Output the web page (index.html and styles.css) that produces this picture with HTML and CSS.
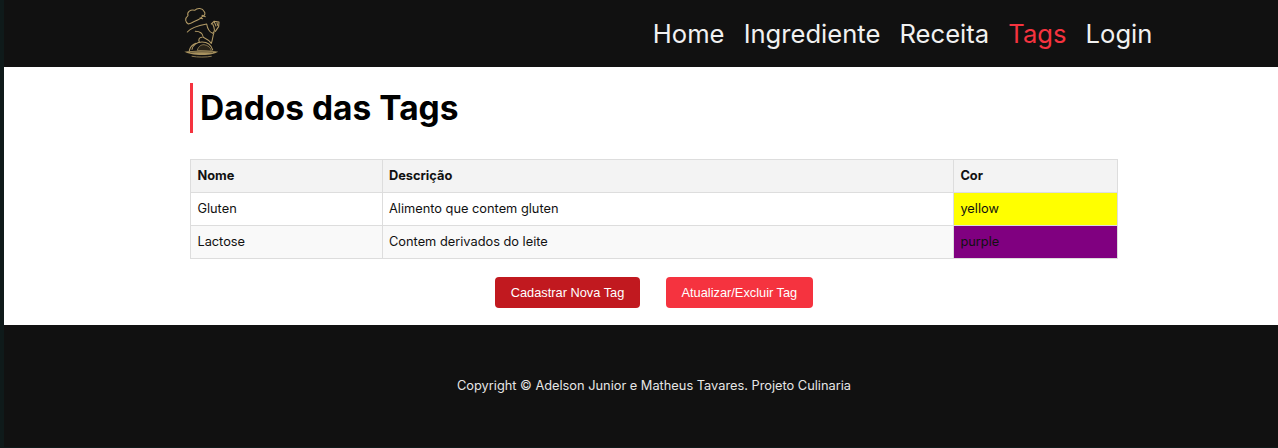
FILE: index.html
```html
<!DOCTYPE html>
<html lang="pt-BR">

<head>
    <meta charset="UTF-8">
    <meta name="viewport" content="width=device-width, initial-scale=1.0">
    <title>Dados das Tags</title>
    <link rel="stylesheet" href="styles.css">
</head>

<body>
    <header class="topo">
        <div class="topo-inner">
            <a class="logo" href="#">
                <svg width="44" height="56" viewBox="30 18 132 168" fill="none" stroke="#b39b66" stroke-width="3.2" stroke-linecap="round" stroke-linejoin="round">
                    <!-- chapeu -->
                    <path d="M55 72C46 66 43 56 54 47C50 36 62 27 74 31C82 23 98 24 102 34C108 40 104 48 96 50C92 58 72 64 62 70Z" />
                    <path d="M96 46L106 50M90 54L98 56" />
                    <!-- corpo e braco -->
                    <path d="M52 96C62 84 88 76 110 72C112 84 118 96 128 100C134 96 136 88 128 72" />
                    <path d="M76 94C88 94 98 100 100 112C108 116 118 122 124 130C128 120 128 108 132 98" />
                    <path d="M96 112C88 112 84 118 88 126" />
                    <!-- mao -->
                    <path d="M124 72L132 64L147 66L146 80L136 94M132 64L138 78M140 65L143 76" />
                    <!-- travessa -->
                    <path d="M66 148C68 136 80 126 96 126C112 126 124 136 128 150" />
                    <path d="M58 152C60 142 68 134 78 130" />
                    <path d="M82 150C86 138 94 134 102 134C114 136 122 142 124 152Z" fill="#2a2418" stroke-width="2" />
                    <path d="M43 155C70 151 118 151 145 155C136 160 122 165 96 165C72 165 52 160 43 155Z" fill="#a8925f" stroke="none" />
                    <path d="M66 169C82 172 110 172 124 169" stroke="#8a7850" stroke-width="3" />
                    <path d="M62 157C82 155 110 155 128 157" stroke="#3a3222" stroke-width="2" />
                </svg>
            </a>
            <nav class="menu">
                <a href="#">Home</a>
                <a href="#">Ingrediente</a>
                <a href="#">Receita</a>
                <a class="ativo" href="#">Tags</a>
                <a href="#">Login</a>
            </nav>
        </div>
    </header>

    <main class="conteudo">
        <h1 class="titulo">Dados das Tags</h1>

        <table class="tabela">
            <thead>
                <tr>
                    <th class="col-nome">Nome</th>
                    <th class="col-desc">Descrição</th>
                    <th>Cor</th>
                </tr>
            </thead>
            <tbody>
                <tr>
                    <td>Gluten</td>
                    <td>Alimento que contem gluten</td>
                    <td class="cor-yellow">yellow</td>
                </tr>
                <tr>
                    <td>Lactose</td>
                    <td>Contem derivados do leite</td>
                    <td class="cor-purple">purple</td>
                </tr>
            </tbody>
        </table>

        <div class="botoes">
            <button class="botao botao-escuro" type="button">Cadastrar Nova Tag</button>
            <button class="botao" type="button">Atualizar/Excluir Tag</button>
        </div>
    </main>

    <footer class="rodape">
        <p>Copyright &copy; Adelson Junior e Matheus Tavares. Projeto Culinaria</p>
    </footer>
</body>

</html>
```

FILE: styles.css
```css
* {
    box-sizing: border-box;
}

body {
    margin: 0 0 1px 4px;
    background-color: #0f1a1a;
    font-family: 'Inter', sans-serif;
    color: #111111;
}

/* Style the header */
.topo {
    background-color: #111111;
    height: 67px;
}

.topo-inner {
    display: flex;
    justify-content: space-between;
    align-items: center;
    height: 100%;
    padding: 0 125.6px 0 176px;
}

.logo {
    display: block;
    height: 56px;
}

.menu {
    display: flex;
    gap: 19.1px;
}

.menu a {
    color: #f1f1f1;
    font-size: 25.6px;
    text-decoration: none;
}

.menu a.ativo {
    color: #f5333f;
}

/* Style the main content section */
.conteudo {
    background-color: #ffffff;
    height: 258px;
    padding: 16px 160px 0 186px;
}

.titulo {
    margin: 0 0 26px;
    border-left: 3px solid #f5333f;
    padding-left: 7px;
    height: 50px;
    line-height: 50px;
    font-size: 33.5px;
    font-weight: 700;
    color: #000000;
}

/* Style the table */
.tabela {
    width: 928px;
    border-collapse: collapse;
    table-layout: fixed;
    font-size: 12.8px;
}

.tabela th,
.tabela td {
    border: 1px solid #dddddd;
    height: 33px;
    padding: 0 6.4px 2px;
    text-align: left;
}

.tabela th {
    background-color: #f3f3f3;
    font-weight: 700;
}

.tabela tbody tr:nth-child(even) {
    background-color: #f9f9f9;
}

.col-nome {
    width: 191.6px;
}

.col-desc {
    width: 571.4px;
}

.tabela td.cor-yellow {
    background-color: yellow;
}

.tabela td.cor-purple {
    background-color: purple;
}

/* Style the buttons */
.botoes {
    display: flex;
    justify-content: center;
    gap: 26px;
    margin-top: 18px;
}

.botao {
    background-color: #f5333f;
    color: #ffffff;
    font-family: 'Liberation Sans', Arial, sans-serif;
    font-size: 12.8px;
    height: 31px;
    padding: 0 15.6px;
    border: none;
    border-radius: 4px;
    cursor: pointer;
}

.botao-escuro {
    background-color: #c1191f;
}

/* Style the footer */
.rodape {
    background-color: #111111;
    color: #e6e6e6;
    height: 122px;
    padding: 53px 0 0 26px;
    text-align: center;
    font-size: 12.8px;
}

.rodape p {
    margin: 0;
}
```
